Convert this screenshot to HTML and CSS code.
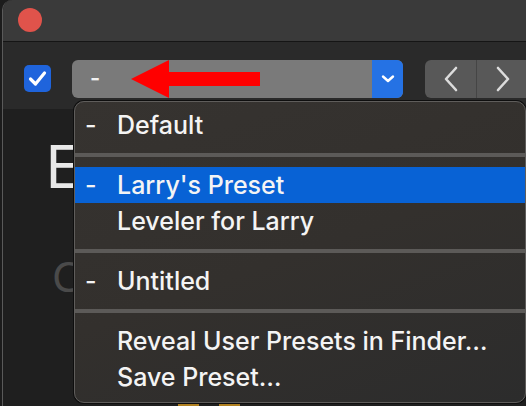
FILE: index.html
```html
<!DOCTYPE html>
<html>
<head>
<meta charset="utf-8">
<link rel="stylesheet" href="styles.css">
</head>
<body>
<div class="screen">
  <div class="window">
    <div class="titlebar"><span class="close"></span></div>
    <div class="toolbar">
      <span class="check">
        <svg width="27" height="27" viewBox="0 0 27 27"><path d="M6.5 14 L11.5 19 L20.5 8" fill="none" stroke="#fff" stroke-width="3.2" stroke-linecap="round" stroke-linejoin="round"/></svg>
      </span>
      <div class="popup">
        <span class="popup-label">-</span>
        <span class="popup-arrow">
          <svg width="14" height="10" viewBox="0 0 14 10"><path d="M2 2.5 L7 7 L12 2.5" fill="none" stroke="#fff" stroke-width="2.4" stroke-linecap="round" stroke-linejoin="round"/></svg>
        </span>
      </div>
      <div class="nav">
        <span class="nav-btn"><svg width="16" height="26" viewBox="0 0 16 26"><path d="M13 2 L3 13 L13 24" fill="none" stroke="#dcdcdc" stroke-width="2.6" stroke-linecap="round" stroke-linejoin="round"/></svg></span>
        <span class="nav-btn"><svg width="16" height="26" viewBox="0 0 16 26"><path d="M3 2 L13 13 L3 24" fill="none" stroke="#dcdcdc" stroke-width="2.6" stroke-linecap="round" stroke-linejoin="round"/></svg></span>
      </div>
    </div>
    <div class="content">
      <div class="big-e">E</div>
      <div class="big-c">C</div>
      <div class="yellows"><span></span><span></span></div>
    </div>
  </div>

  <svg class="red-arrow" width="130" height="40" viewBox="0 0 130 40"><polygon points="0,19 38,0 38,12 129,12 129,26 38,26 38,38" fill="#ff0000"/></svg>

  <div class="menu">
    <div class="item"><span class="mark">-</span>Default</div>
    <div class="sep"></div>
    <div class="item selected"><span class="mark">-</span>Larry's Preset</div>
    <div class="item"><span class="mark"></span>Leveler for Larry</div>
    <div class="sep"></div>
    <div class="item"><span class="mark">-</span>Untitled</div>
    <div class="sep"></div>
    <div class="item"><span class="mark"></span>Reveal User Presets in Finder…</div>
    <div class="item"><span class="mark"></span>Save Preset…</div>
  </div>
</div>
</body>
</html>
```
FILE: styles.css
```css
* { box-sizing: border-box; }
html, body { margin: 0; padding: 0; }
body {
  width: 526px;
  height: 406px;
  overflow: hidden;
  background: #1c1c1c;
  font-family: Inter, "Noto Sans", sans-serif;
}
.screen {
  position: relative;
  width: 526px;
  height: 406px;
  padding-left: 2px;
}
.window {
  height: 406px;
  border-left: 1px solid #5a5a5a;
  border-top-left-radius: 10px;
  overflow: hidden;
  display: flex;
  flex-direction: column;
  background: #1f1f1f;
}
.titlebar {
  height: 42px;
  background: #3a3a3a;
  border-bottom: 1px solid #151515;
  display: flex;
  align-items: center;
  padding-left: 15px;
  flex: none;
}
.close {
  width: 24px;
  height: 24px;
  border-radius: 50%;
  background: #e0534b;
  margin-top: -2px;
}
.toolbar {
  height: 67px;
  flex: none;
  background: #2a2a2a;
  display: flex;
  align-items: flex-start;
  padding-top: 18px;
  padding-left: 21px;
}
.toolbar > * { flex: none; }
.check {
  width: 27px;
  height: 27px;
  margin-top: 5px;
  border-radius: 5px;
  background: #1f64dc;
  display: flex;
}
.popup {
  margin-left: 21px;
  width: 331px;
  height: 38px;
  border-radius: 6px;
  background: #7a7a7a;
  display: flex;
  align-items: center;
  overflow: hidden;
}
.popup-label {
  flex: 1;
  color: #f2f2f2;
  font-size: 22px;
  font-weight: 600;
  padding-left: 18px;
  padding-bottom: 2px;
}
.popup-arrow {
  width: 31px;
  height: 38px;
  background: #2572e4;
  display: flex;
  align-items: center;
  justify-content: center;
}
.nav {
  margin-left: 22px;
  height: 38px;
  display: flex;
  border-radius: 6px;
  overflow: hidden;
  background: #585858;
}
.nav-btn {
  width: 51px;
  height: 38px;
  display: flex;
  align-items: center;
  justify-content: center;
}
.nav-btn + .nav-btn {
  border-left: 1px solid #454545;
  width: 60px;
  padding-right: 8px;
}
.content {
  flex: 1;
  position: relative;
  padding-left: 42px;
}
.big-e {
  font-family: "Noto Sans", sans-serif;
  font-weight: 400;
  font-size: 60px;
  line-height: 60px;
  color: #e8e8e8;
  margin-top: 26px;
}
.big-c {
  font-family: "Noto Sans", sans-serif;
  font-weight: 400;
  font-size: 42px;
  line-height: 42px;
  color: #4a4a4a;
  margin-top: 60px;
  margin-left: 7px;
}
.yellows {
  display: flex;
  gap: 20px;
  margin-top: 107px;
  margin-left: 133px;
}
.yellows span {
  width: 21px;
  height: 4px;
  background: #b08020;
}
.red-arrow {
  position: absolute;
  left: 131px;
  top: 60px;
}
.menu {
  position: absolute;
  left: 74px;
  top: 101px;
  width: 452px;
  height: 302px;
  border-radius: 10px;
  border: 1px solid #5f5d5b;
  box-shadow: 0 0 0 1px #0e0e0e;
  background: linear-gradient(160deg, #363330 0%, #33302d 50%, #2c2c2c 100%);
  padding-top: 5px;
  color: #f4f4f4;
  font-size: 25px;
  font-weight: 500;
}
.item {
  height: 36px;
  display: flex;
  align-items: center;
  padding-left: 10px;
  white-space: nowrap;
}
.item.selected {
  background: #0862d5;
}
.mark {
  width: 32px;
  flex: none;
}
.sep {
  height: 24px;
  padding-top: 10px;
}
.sep::before {
  content: "";
  display: block;
  height: 4px;
  background: #5c5a58;
}
```
